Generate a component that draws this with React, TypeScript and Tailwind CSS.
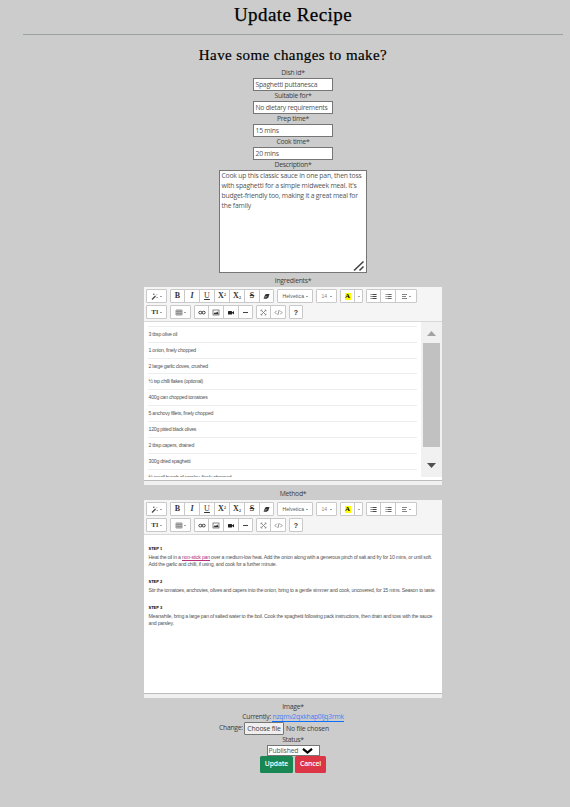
import React from "react";

const ic = "h-[7px] w-[7px]";

function Caret() {
  return <span className="ml-[1.5px] h-0 w-0 border-x-[1.5px] border-t-[1.5px] border-x-transparent border-t-[#444]" />;
}

function Group({ children }: { children: React.ReactNode }) {
  return <div className="flex h-[14px] rounded-[1px] border border-[#c9c9c9] bg-white divide-x divide-[#c9c9c9]">{children}</div>;
}

function Btn({ w = "w-[15px]", children }: { w?: string; children: React.ReactNode }) {
  return <div className={`flex h-full items-center justify-center ${w}`}>{children}</div>;
}

function Lines({ kind }: { kind: "ul" | "ol" | "p" }) {
  return (
    <svg viewBox="0 0 7 7" className={ic} stroke={kind === "p" ? "#777" : "#333"} strokeWidth="0.9">
      {kind === "p" ? (
        <path d="M1 1.5h5M1 3.5h4M1 5.5h5" />
      ) : (
        <path d="M2.4 1.5h4.2M2.4 3.5h4.2M2.4 5.5h4.2M.6 1.5h1M.6 3.5h1M.6 5.5h1" strokeWidth={kind === "ul" ? "0.9" : "0.75"} />
      )}
    </svg>
  );
}

function Toolbar() {
  return (
    <div className="flex h-[35px] flex-col gap-[2px] border-b border-[#d8d8d8] bg-[#f5f5f5] pl-[2px] pt-[2px] font-['Liberation_Serif',serif] text-[8px] leading-none tracking-normal text-[#333]">
      <div className="flex gap-[3px]">
        <Group>
          <Btn w="w-[19px]">
            <svg viewBox="0 0 8 7" className="h-[7px] w-[8px]" fill="none" stroke="#444">
              <path d="M1 6.5L4.5 3" strokeWidth="1.2" />
              <path d="M5 2.3l1-1M2 1.3h1.5M5.5 4.5h1.4M2.7.5v1.5" strokeWidth=".6" />
            </svg>
            <Caret />
          </Btn>
        </Group>
        <Group>
          <Btn w="w-[14px]"><b>B</b></Btn>
          <Btn><i className="font-semibold">I</i></Btn>
          <Btn><span className="underline">U</span></Btn>
          <Btn><span className="font-semibold">X<sup className="text-[4px]">2</sup></span></Btn>
          <Btn><span className="font-semibold">X<sub className="text-[4px]">2</sub></span></Btn>
          <Btn><b className="line-through">S</b></Btn>
          <Btn w="w-[13px]">
            <svg viewBox="0 0 7 7" className={ic}><path d="M2.8 1h3.7L5.4 4.2 3.8 5.8H.6L1.5 3z" fill="#333" /><path d="M1.8 4.8l.5-1.1h1.8" stroke="#ddd" strokeWidth=".5" fill="none" /></svg>
          </Btn>
        </Group>
        <Group>
          <Btn w="w-[34px]"><span className="font-['Liberation_Sans',sans-serif] text-[5px] tracking-[0.12px] text-[#555]">Helvetica</span><Caret /></Btn>
        </Group>
        <Group>
          <Btn w="w-[19px]"><span className="font-['Liberation_Sans',sans-serif] text-[5px] text-[#888]">14</span><span className="w-[1px]" /><Caret /></Btn>
        </Group>
        <Group>
          <Btn w="w-[14px]"><span className="flex h-[7px] w-[6px] items-center justify-center bg-[#ff0] text-[7px] font-bold text-black">A</span></Btn>
          <Btn w="w-[7px]"><span className="-ml-[1.5px] flex"><Caret /></span></Btn>
        </Group>
        <Group>
          <Btn w="w-[14px]"><Lines kind="ul" /></Btn>
          <Btn><Lines kind="ol" /></Btn>
          <Btn w="w-[20px]"><Lines kind="p" /><Caret /></Btn>
        </Group>
      </div>
      <div className="flex gap-[3px]">
        <Group>
          <Btn w="w-[19px]"><b className="text-[7px]">T</b><b className="text-[6px]">I</b><Caret /></Btn>
        </Group>
        <Group>
          <Btn w="w-[19px]">
            <svg viewBox="0 0 8 7" className="h-[7px] w-[8px]" fill="none" stroke="#555" strokeWidth=".6"><path d="M1 1h6v5H1zM1 2.7h6M1 4.3h6M3 1v5M5 1v5" /></svg>
            <Caret />
          </Btn>
        </Group>
        <Group>
          <Btn w="w-[14px]">
            <svg viewBox="0 0 8 7" className="h-[7px] w-[8px]" fill="none" stroke="#333" strokeWidth=".9"><rect x=".8" y="2.3" width="3.2" height="2.6" rx="1.3" /><rect x="4" y="2.3" width="3.2" height="2.6" rx="1.3" /></svg>
          </Btn>
          <Btn>
            <svg viewBox="0 0 8 7" className="h-[7px] w-[8px]"><rect x="1" y="1" width="6" height="5" fill="none" stroke="#555" strokeWidth=".7" /><path d="M1.8 5.3V4.4L3 3.3l1 .8 1.2-1.6 1.2 1.4v1.4z" fill="#333" /></svg>
          </Btn>
          <Btn>
            <svg viewBox="0 0 8 7" className="h-[7px] w-[8px]" fill="#222"><rect x="1" y="2" width="4" height="3.4" rx=".5" /><path d="M4.6 3.7L7 2v3.4z" /></svg>
          </Btn>
          <Btn w="w-[13px]"><span className="h-px w-[5px] bg-[#444]" /></Btn>
        </Group>
        <Group>
          <Btn w="w-[14px]">
            <svg viewBox="0 0 7 7" className={ic} stroke="#777" strokeWidth=".8" fill="none"><path d="M1.5 1.5l4 4M5.5 1.5l-4 4M1 2.3V1h1.3M4.7 1H6v1.3M1 4.7V6h1.3M4.7 6H6V4.7" /></svg>
          </Btn>
          <Btn w="w-[14px]">
            <svg viewBox="0 0 9 7" className="h-[7px] w-[9px]" stroke="#666" strokeWidth=".7" fill="none"><path d="M2.7 1.7L1 3.5l1.7 1.8M6.3 1.7L8 3.5 6.3 5.3M5.2 1L3.8 6" /></svg>
          </Btn>
        </Group>
        <Group>
          <Btn w="w-[12px]"><b className="font-['Liberation_Sans',sans-serif] text-[7px]">?</b></Btn>
        </Group>
      </div>
    </div>
  );
}

function Editor({ children }: { children: React.ReactNode }) {
  return (
    <div className="flex h-[198px] w-[298px] flex-col bg-white text-left font-['Liberation_Sans',sans-serif] text-[#555]">
      <Toolbar />
      <div className="h-[158px] overflow-hidden">{children}</div>
      <div className="h-[5px] border-t border-[#bbb] bg-[#f0f0f0]" />
    </div>
  );
}

const ingredients: [string, string][] = [
  ["3 tbsp olive oil", "h-[16px]"],
  ["1 onion, finely chopped", "h-[16px]"],
  ["2 large garlic cloves, crushed", "h-[15px]"],
  ["½ tsp chilli flakes (optional)", "h-[16px]"],
  ["400g can chopped tomatoes", "h-[16px]"],
  ["5 anchovy fillets, finely chopped", "h-[16px]"],
  ["120g pitted black olives", "h-[16px]"],
  ["2 tbsp capers, drained", "h-[16px]"],
  ["300g dried spaghetti", "h-[16px]"],
  ["½ small bunch of parsley, finely chopped", "h-[16px]"],
];

function Label({ children }: { children: string }) {
  return <div className="h-[10px] leading-[9px]">{children}</div>;
}

function Field({ label, value }: { label: string; value: string }) {
  return (
    <>
      <Label>{label}</Label>
      <div className="h-[13px] w-[80px] border border-[#767676] bg-white pl-[1.5px] text-left leading-[11px] text-[#555]">{value}</div>
    </>
  );
}

function Step({ n, gap, children }: { n: number; gap: string; children: React.ReactNode }) {
  return (
    <div className={gap}>
      <div className="h-[9px] text-[4px] font-bold leading-[7px] tracking-normal text-black">STEP {n}</div>
      <div className="whitespace-nowrap text-[5.2px] leading-[7px] tracking-[-0.225px]">{children}</div>
    </div>
  );
}

export default function App() {
  return (
    <div className="flex h-[807px] w-[570px] flex-col items-center overflow-hidden bg-[#ccc] pl-[23px] pr-[7px] text-center font-['Open_Sans',sans-serif] text-[6.8px] tracking-[-0.26px] text-[#3c3c3c]">
      <h1 className="h-[34px] whitespace-nowrap pt-[4px] font-['Liberation_Serif',serif] text-[19px] leading-[22px] tracking-[0.45px] text-black [-webkit-text-stroke:0.25px_#000]">Update Recipe</h1>
      <div className="h-px w-full bg-[#98a3a1]" />
      <h2 className="h-[33px] whitespace-nowrap pt-[11px] font-['Liberation_Serif',serif] text-[15px] leading-[18px] tracking-[0.42px] text-black [-webkit-text-stroke:0.2px_#000]">Have some changes to make?</h2>
      <Field label="Dish id*" value="Spaghetti puttanesca" />
      <Field label="Suitable for*" value="No dietary requirements" />
      <Field label="Prep time*" value="15 mins" />
      <Field label="Cook time*" value="20 mins" />
      <Label>Description*</Label>
      <div className="relative h-[103px] w-[148px] border border-[#767676] bg-white pl-[1.5px] text-left leading-[10px] tracking-[-0.2px] text-[#555]">
        <div className="whitespace-nowrap">Cook up this classic sauce in one pan, then toss<br />with spaghetti for a simple midweek meal. It's<br />budget-friendly too, making it a great meal for<br />the family</div>
        <svg viewBox="0 0 12 12" className="absolute bottom-0 right-[1px] h-[12px] w-[12px]" stroke="#444" strokeWidth="1.6"><path d="M1 10.5l9.5-9M6.5 10.5l4-4" /></svg>
      </div>
      <div className="h-[14px] leading-[16px]">Ingredients*</div>
      <Editor>
        <div className="flex">
          <div className="ml-[4px] mr-[4px] mt-[4px] h-[151px] w-[269px] overflow-hidden text-[5.2px] tracking-[-0.26px]">
            {ingredients.map(([t, h]) => (
              <div key={t} className={`border-t border-[#eaeeee] pl-[0.5px] leading-[15px] ${h}`}>{t}</div>
            ))}
          </div>
          <div className="flex h-[155px] w-[21px] flex-col items-center bg-[#f1f1f1]">
            <svg viewBox="0 0 9 5" className="mb-[7px] mt-[9px] h-[5px] w-[9px]"><path d="M0 5L4.5 0 9 5z" fill="#a3a3a3" /></svg>
            <div className="h-[104px] w-[17px] bg-[#c1c1c1]" />
            <svg viewBox="0 0 9 5" className="mt-[16px] h-[5px] w-[9px]"><path d="M0 0l4.5 5L9 0z" fill="#505050" /></svg>
          </div>
        </div>
      </Editor>
      <div className="h-[15px] leading-[17px]">Method*</div>
      <Editor>
        <div className="pl-[4.5px] pt-[10px]">
          <Step n={1} gap="h-[33px]">
            Heat the oil in a <span className="border-b border-[#b5317a] text-[#b5317a]">non-stick pan</span> over a medium-low heat. Add the onion along with a generous pinch of salt and fry for 10 mins, or until soft.<br />Add the garlic and chilli, if using, and cook for a further minute.
          </Step>
          <Step n={2} gap="h-[26px]">Stir the tomatoes, anchovies, olives and capers into the onion, bring to a gentle simmer and cook, uncovered, for 15 mins. Season to taste.</Step>
          <Step n={3} gap="h-[26px]">Meanwhile, bring a large pan of salted water to the boil. Cook the spaghetti following pack instructions, then drain and toss with the sauce<br />and parsley.</Step>
        </div>
      </Editor>
      <div className="mt-[4px] h-[10px] leading-[10px]">Image*</div>
      <div className="h-[10px] leading-[10px]">Currently: <span className="border-b border-[#0d6efd] text-[#4c7df5]">nzqmv2qxkhap0ljq3rmk</span></div>
      <div className="flex h-[13px] w-[148px] items-center whitespace-nowrap">
        <span className="w-[25px] text-left">Change:</span>
        <span className="mr-[2px] h-[13px] w-[40px] rounded-[1px] border border-[#767676] bg-[#efefef] leading-[11px] tracking-[-0.15px]">Choose file</span>
        <span className="leading-[11px] tracking-[-0.15px]">No file chosen</span>
      </div>
      <div className="h-[10px] leading-[9px]">Status*</div>
      <div className="flex h-[11px] w-[53px] items-center border border-[#767676] bg-white pl-[1px] leading-[9px] tracking-[-0.15px] text-[#555]">
        Published
        <svg viewBox="0 0 11 6" className="ml-auto mr-[6px] h-[6px] w-[11px]" fill="none" stroke="#000" strokeWidth="2.2"><path d="M1 .8l4.5 3.7L10 .8" /></svg>
      </div>
      <div className="flex h-[17px] gap-[2px] font-semibold leading-[15px] tracking-[-0.12px] text-white">
        <div className="w-[33px] rounded-[1.5px] bg-[#198754]">Update</div>
        <div className="w-[31px] rounded-[1.5px] bg-[#dc3545]">Cancel</div>
      </div>
    </div>
  );
}
